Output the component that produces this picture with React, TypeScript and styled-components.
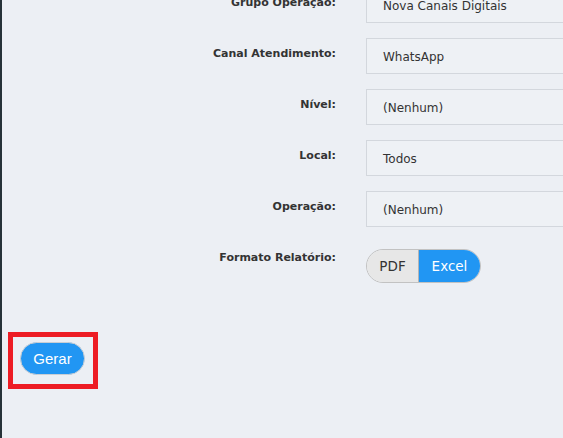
import React from "react";
import styled, { createGlobalStyle } from "styled-components";

const GlobalStyle = createGlobalStyle`
  html, body {
    margin: 0;
    padding: 0;
    background: #eceff4;
    overflow: hidden;
  }
  body {
    font-family: "DejaVu Sans", Verdana, sans-serif;
  }
`;

const Page = styled.div`
  display: flex;
  height: 100vh;
`;

const Strip = styled.div`
  width: 2px;
  flex: none;
  background: #263238;
`;

const Content = styled.div`
  flex: 1;
  min-width: 0;
  overflow: hidden;
  padding-left: 6px;
`;

const Form = styled.div`
  display: grid;
  grid-template-columns: 328px 1fr;
  column-gap: 30px;
  row-gap: 15px;
  margin-top: -13px;
`;

const Label = styled.div<{ $top: number; $extra?: number }>`
  text-align: right;
  font-size: 11px;
  font-weight: bold;
  line-height: 13px;
  color: #333;
  padding-top: ${(p) => p.$top}px;
  margin-top: ${(p) => p.$extra ?? 0}px;
`;

const Field = styled.div`
  box-sizing: border-box;
  width: 260px;
  height: 36px;
  display: flex;
  align-items: center;
  padding: 1px 16px 0;
  border: 1px solid #d3d7dd;
  background: #eef1f5;
  font-size: 12px;
  color: #333;
  white-space: nowrap;
`;

const Toggle = styled.div`
  display: inline-flex;
  align-self: start;
  justify-self: start;
  margin-top: 7px;
  height: 34px;
  box-sizing: border-box;
  border: 1px solid #c2c2c2;
  border-radius: 17px;
  overflow: hidden;
`;

const ToggleOption = styled.div<{ $active?: boolean; $w: number }>`
  width: ${(p) => p.$w}px;
  display: flex;
  align-items: center;
  justify-content: center;
  font-size: 13.5px;
  background: ${(p) => (p.$active ? "#2196f3" : "#e7e7e7")};
  color: ${(p) => (p.$active ? "#fff" : "#333")};
  border-left: ${(p) => (p.$active ? "1px solid #b5b5b5" : "none")};
`;

const Highlight = styled.div`
  display: inline-block;
  margin-top: 49px;
  border: 5px solid #ed1c24;
  padding: 5px 8px 9px 7px;
`;

const Button = styled.button`
  width: 65px;
  height: 33px;
  border-radius: 17px;
  border: 1px solid #c9ced4;
  background: #2196f3;
  color: #fff;
  font-family: "Liberation Sans", Arial, sans-serif;
  font-size: 15px;
  padding: 0;
  display: block;
`;

const rows = [
  ["Grupo Operação:", "Nova Canais Digitais"],
  ["Canal Atendimento:", "WhatsApp"],
  ["Nível:", "(Nenhum)"],
  ["Local:", "Todos"],
  ["Operação:", "(Nenhum)"],
];

export default function App() {
  return (
    <>
      <GlobalStyle />
      <Page>
        <Strip />
        <Content>
          <Form>
            {rows.map(([label, value]) => (
              <React.Fragment key={label + value}>
                <Label $top={9}>{label}</Label>
                <Field>{value}</Field>
              </React.Fragment>
            ))}
            <Label $top={2} $extra={7}>Formato Relatório:</Label>
            <Toggle>
              <ToggleOption $w={51}>PDF</ToggleOption>
              <ToggleOption $w={61} $active>
                Excel
              </ToggleOption>
            </Toggle>
          </Form>
          <Highlight>
            <Button>Gerar</Button>
          </Highlight>
        </Content>
      </Page>
    </>
  );
}
